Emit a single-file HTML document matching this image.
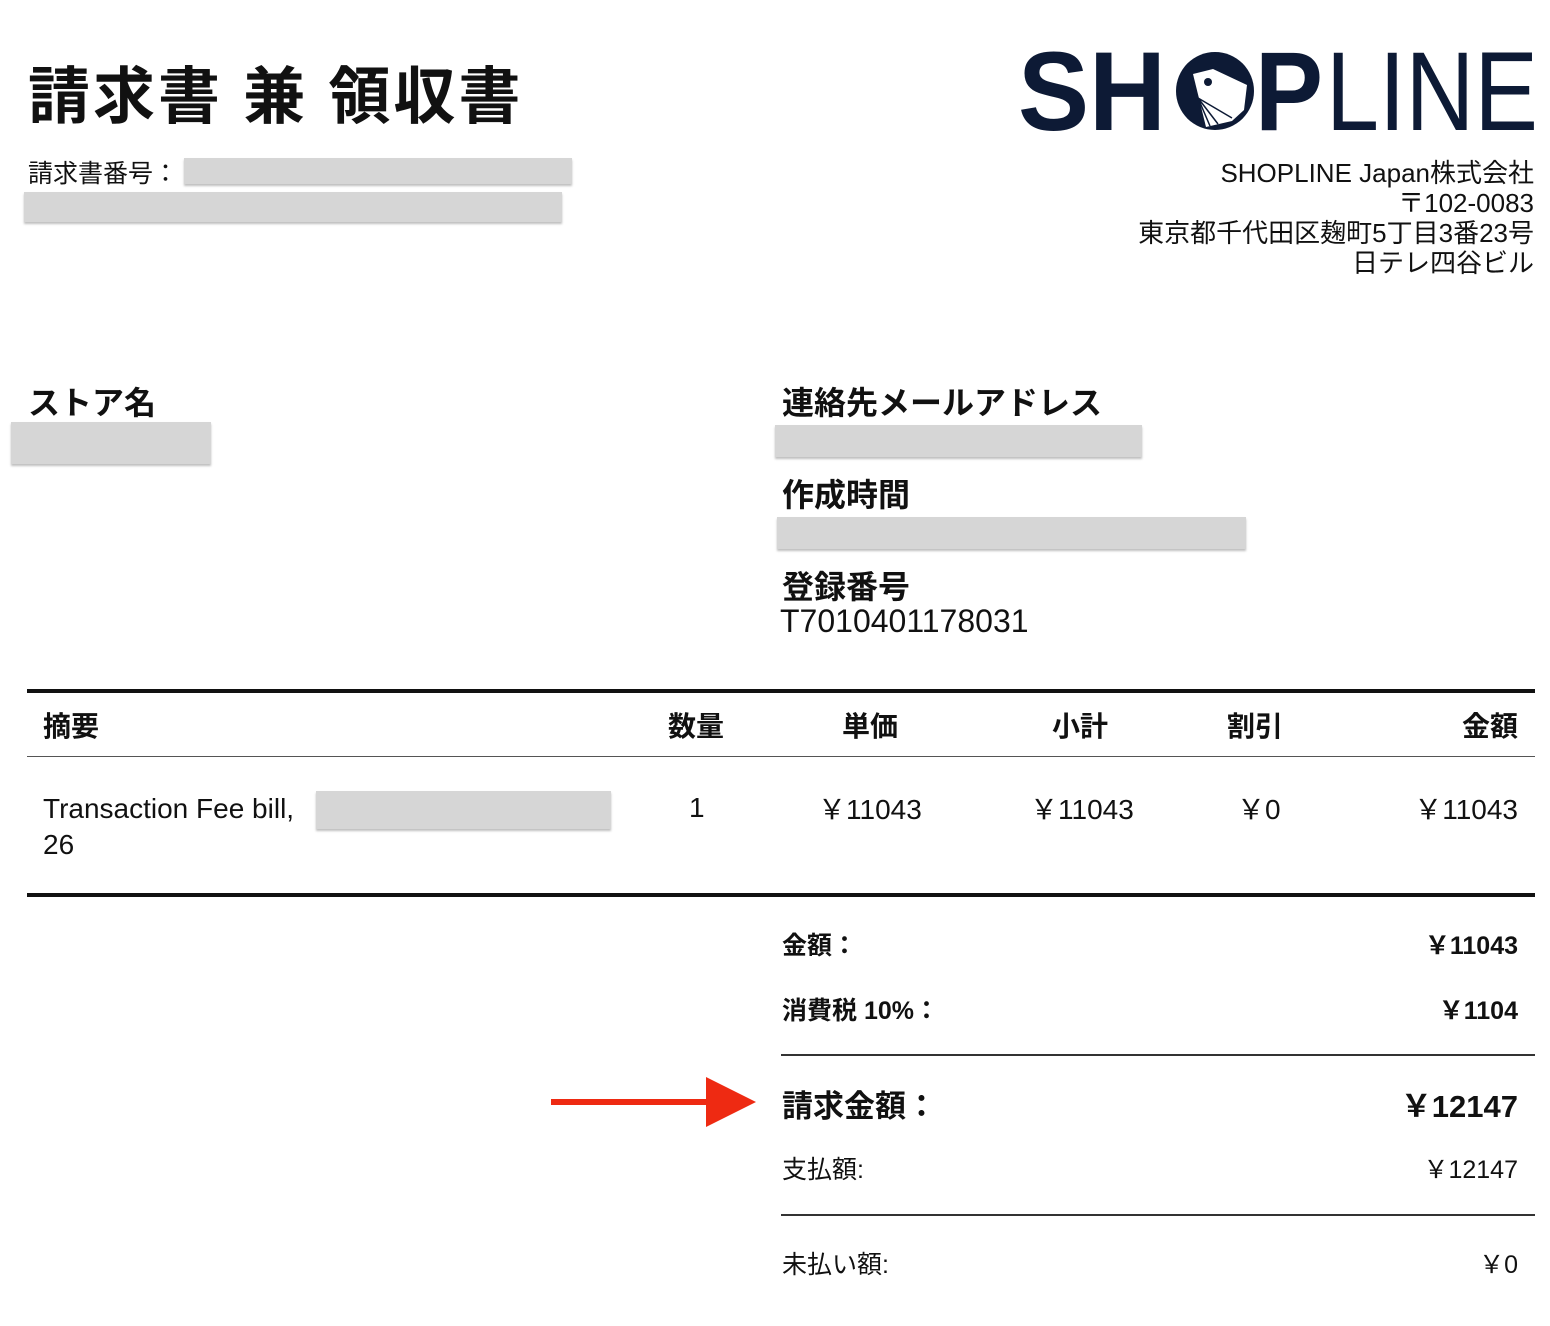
<!DOCTYPE html>
<html><head><meta charset="utf-8"><style>
body{margin:0;width:1550px;height:1326px;background:#fff;position:relative;overflow:hidden;font-family:"Liberation Sans","Noto Sans CJK JP",sans-serif;color:#111}
.a{position:absolute;white-space:nowrap}
.r{position:absolute;background:#d6d6d6;box-shadow:0 2px 2px rgba(0,0,0,.25)}
.h{position:absolute;background:#111}
.b{font-weight:bold}
</style></head><body>
<div class="a b" style="left:28px;top:46px;font-size:62px;letter-spacing:3px">請求書 兼 領収書</div>
<div class="a" style="left:28px;top:154px;font-size:25px">請求書番号：</div>
<div class="r" style="left:184px;top:158px;width:388px;height:26px"></div>
<div class="r" style="left:24px;top:192px;width:538px;height:30px"></div>

<svg class="a" style="left:0;top:0" width="1550" height="150">
<g fill="#0d1a35">
<text x="1018" y="130" font-family="Liberation Sans" font-weight="bold" font-size="112" textLength="148" lengthAdjust="spacingAndGlyphs">SH</text>
<circle cx="1215" cy="91" r="39"/>
<text x="1255" y="130" font-family="Liberation Sans" font-weight="bold" font-size="112" textLength="68" lengthAdjust="spacingAndGlyphs">P</text>
<text x="1326" y="130" font-family="Liberation Sans" font-size="112" textLength="212" lengthAdjust="spacingAndGlyphs">LINE</text>
</g>
<path d="M1193 74 L1213 69 L1247 85 L1244 110 L1232 121 L1206 127 Z" fill="#fff"/>
<circle cx="1208" cy="82" r="4" fill="#0d1a35"/>
<path d="M1198 98 L1232 118 M1198 98 L1218 124 M1198 98 L1210 126" stroke="#0d1a35" stroke-width="1.5" fill="none"/>
</svg>

<div class="a" style="right:16px;top:158px;font-size:26px;text-align:right;line-height:30px">SHOPLINE Japan株式会社<br>〒102-0083<br>東京都千代田区麹町5丁目3番23号<br>日テレ四谷ビル</div>

<div class="a b" style="left:28px;top:378px;font-size:32px">ストア名</div>
<div class="r" style="left:11px;top:422px;width:200px;height:42px"></div>
<div class="a b" style="left:782px;top:378px;font-size:32px">連絡先メールアドレス</div>
<div class="r" style="left:775px;top:425px;width:367px;height:32px"></div>
<div class="a b" style="left:782px;top:470px;font-size:32px">作成時間</div>
<div class="r" style="left:777px;top:517px;width:469px;height:32px"></div>
<div class="a b" style="left:782px;top:562px;font-size:32px">登録番号</div>
<div class="a" style="left:780px;top:603px;font-size:32px">T7010401178031</div>

<div class="h" style="left:27px;top:689px;width:1508px;height:4px"></div>
<div class="a b" style="left:43px;top:705px;font-size:28px">摘要</div>
<div class="a b" style="left:668px;top:705px;font-size:28px">数量</div>
<div class="a b" style="left:842px;top:705px;font-size:28px">単価</div>
<div class="a b" style="left:1052px;top:705px;font-size:28px">小計</div>
<div class="a b" style="left:1227px;top:705px;font-size:28px">割引</div>
<div class="a b" style="right:32px;top:705px;font-size:28px">金額</div>
<div class="h" style="left:27px;top:756px;width:1508px;height:1px;background:#555"></div>
<div class="a" style="left:43px;top:791px;font-size:28px;line-height:36px">Transaction Fee bill,<br>26</div>
<div class="r" style="left:316px;top:791px;width:295px;height:38px"></div>
<div class="a" style="left:689px;top:792px;font-size:28px">1</div>
<div class="a" style="left:818px;top:788px;font-size:28px">￥11043</div>
<div class="a" style="left:1030px;top:788px;font-size:28px">￥11043</div>
<div class="a" style="left:1237px;top:788px;font-size:28px">￥0</div>
<div class="a" style="right:32px;top:788px;font-size:28px">￥11043</div>
<div class="h" style="left:27px;top:893px;width:1508px;height:4px"></div>

<div class="a b" style="left:782px;top:926px;font-size:25px">金額：</div>
<div class="a b" style="right:32px;top:926px;font-size:25px">￥11043</div>
<div class="a b" style="left:782px;top:991px;font-size:25px">消費税 10%：</div>
<div class="a b" style="right:32px;top:991px;font-size:25px">￥1104</div>
<div class="h" style="left:781px;top:1054px;width:754px;height:2px;background:#333"></div>
<div class="a b" style="left:782px;top:1081px;font-size:31px">請求金額：</div>
<div class="a b" style="right:32px;top:1081px;font-size:31px">￥12147</div>
<div class="a" style="left:782px;top:1150px;font-size:25px">支払額:</div>
<div class="a" style="right:32px;top:1150px;font-size:25px">￥12147</div>
<div class="h" style="left:781px;top:1214px;width:754px;height:2px;background:#333"></div>
<div class="a" style="left:782px;top:1245px;font-size:25px">未払い額:</div>
<div class="a" style="right:32px;top:1245px;font-size:25px">￥0</div>

<svg class="a" style="left:548px;top:1074px" width="212" height="56"><path d="M3 25 H162 V31 H3 Z M158 3 L208 28 L158 53 Z" fill="#ee2a12"/></svg>
</body></html>
